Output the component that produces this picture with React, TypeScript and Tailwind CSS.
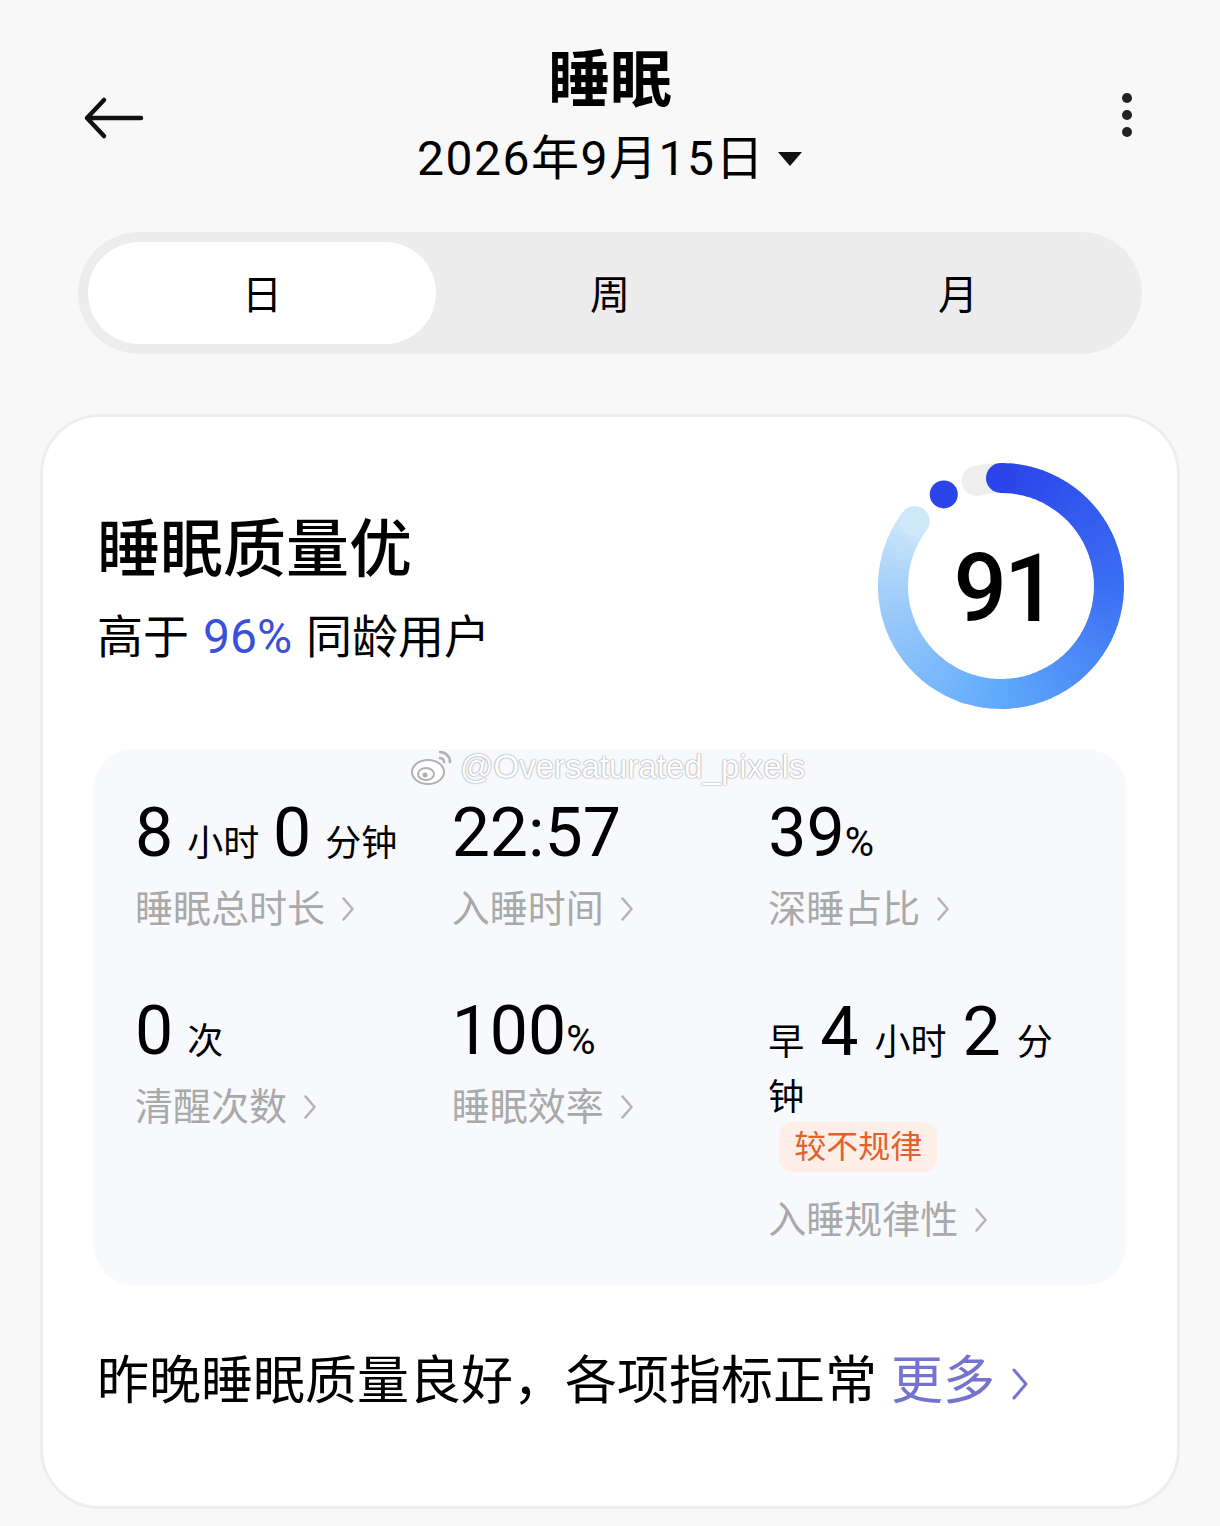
import React from 'react';

type RGB = [number, number, number];

const ringStops: [number, RGB][] = [
  [0, [42, 68, 233]],
  [90, [59, 110, 243]],
  [180, [94, 169, 251]],
  [270, [165, 208, 249]],
  [307, [207, 233, 251]],
];

function colorAt(deg: number) {
  for (let i = 0; i < ringStops.length - 1; i++) {
    const [a, ca] = ringStops[i];
    const [b, cb] = ringStops[i + 1];
    if (deg >= a && deg <= b) {
      const t = (deg - a) / (b - a);
      const c = ca.map((v, k) => Math.round(v + (cb[k] - v) * t));
      return `rgb(${c[0]},${c[1]},${c[2]})`;
    }
  }
  const last = ringStops[ringStops.length - 1][1];
  return `rgb(${last[0]},${last[1]},${last[2]})`;
}

const CX = 125;
const CY = 125;
const R = 108;

function pt(deg: number) {
  const rad = (deg * Math.PI) / 180;
  return [CX + R * Math.sin(rad), CY - R * Math.cos(rad)];
}

function arc(a: number, b: number) {
  const [x1, y1] = pt(a);
  const [x2, y2] = pt(b);
  const large = b - a > 180 ? 1 : 0;
  return `M ${x1} ${y1} A ${R} ${R} 0 ${large} 1 ${x2} ${y2}`;
}

function ScoreRing({ score }: { score: number }) {
  const end = 307;
  const step = 4;
  const segs: number[] = [];
  for (let d = 0; d < end; d += step) segs.push(d);
  const [sx, sy] = pt(0);
  const [ex, ey] = pt(end);
  const [dx, dy] = pt(-32);

  return (
    <div className="relative h-[250px] w-[250px]">
      <svg width="250" height="250" viewBox="0 0 250 250">
        <path d={arc(-13, 0)} stroke="#eeeeee" strokeWidth="30" strokeLinecap="round" fill="none" />
        {segs.map((d) => (
          <path
            key={d}
            d={arc(d, Math.min(d + step + 0.6, end))}
            stroke={colorAt(d + step / 2)}
            strokeWidth="30"
            fill="none"
          />
        ))}
        <circle cx={sx} cy={sy} r="15" fill={colorAt(0)} />
        <circle cx={ex} cy={ey} r="15" fill={colorAt(end)} />
        <circle cx={dx} cy={dy} r="14" fill="#2b45ea" />
      </svg>
      <div className="absolute inset-0 flex items-center justify-center pl-[6px] pt-[6px] text-[94px] font-medium leading-none tracking-[-3px] text-black">
        {score}
      </div>
    </div>
  );
}

function Chevron({ className = 'text-[#b4b4b4]', w = 14, h = 26, sw = 2.4 }: { className?: string; w?: number; h?: number; sw?: number }) {
  return (
    <svg width={w} height={h} viewBox={`0 0 ${w} ${h}`} className={className}>
      <path
        d={`M ${sw} ${sw} L ${w - sw} ${h / 2} L ${sw} ${h - sw}`}
        stroke="currentColor"
        strokeWidth={sw}
        fill="none"
        strokeLinecap="round"
        strokeLinejoin="round"
      />
    </svg>
  );
}

function StatLabel({ children }: { children: React.ReactNode }) {
  return (
    <div className="mt-[9px] flex items-center gap-[16px] text-[38px] leading-[46px] text-[#a9a9a9]">
      <span>{children}</span>
      <Chevron />
    </div>
  );
}

function Big({ children }: { children: React.ReactNode }) {
  return <span className="text-[68px]">{children}</span>;
}

function Pct() {
  return <span className="text-[40px]">%</span>;
}

export default function App() {
  return (
    <div className="min-h-[1526px] bg-[#f8f8f8] font-['Roboto','Noto_Sans_CJK_SC',sans-serif] text-black">
      {/* header */}
      <div className="grid grid-cols-[1fr_auto_1fr] items-center pt-[45px]">
        <div className="pl-[83px] pt-[2px]">
          <svg width="62" height="44" viewBox="0 0 62 44">
            <path d="M 4 22 L 58 22 M 21 4 L 4 22 L 21 40" stroke="#111" strokeWidth="4.5" fill="none" strokeLinecap="round" strokeLinejoin="round" />
          </svg>
        </div>
        <div className="flex flex-col items-center">
          <div className="text-[62px] font-bold leading-[72px]">睡眠</div>
          <div className="mt-[12px] flex items-center gap-[12px] text-[48px] leading-[60px] tracking-[1.5px]">
            <span>2026年9月15日</span>
            <svg width="26" height="16" viewBox="0 0 26 16">
              <path d="M 1 1 L 25 1 L 13 15 Z" fill="#111" strokeLinejoin="round" />
            </svg>
          </div>
        </div>
        <div className="flex justify-end pr-[88px]">
          <div className="flex flex-col gap-[7px] pb-[4px]">
            <span className="h-[10px] w-[10px] rounded-full bg-[#222]" />
            <span className="h-[10px] w-[10px] rounded-full bg-[#222]" />
            <span className="h-[10px] w-[10px] rounded-full bg-[#222]" />
          </div>
        </div>
      </div>

      {/* tabs */}
      <div className="mx-[78px] mt-[43px] grid h-[122px] grid-cols-3 rounded-full bg-[#ececec] p-[10px] text-[40px]">
        <div className="flex items-center justify-center rounded-full bg-white pt-[6px]">日</div>
        <div className="flex items-center justify-center pt-[6px]">周</div>
        <div className="flex items-center justify-center pt-[6px]">月</div>
      </div>

      {/* card */}
      <div className="mx-[40px] mt-[60px] rounded-[60px] border-[3px] border-[#ededed] bg-white px-[51px] pb-[94px] pt-[44px]">
        <div className="flex items-center justify-between">
          <div className="pl-[3px] pt-[6px]">
            <div className="text-[63px] font-medium leading-[74px]">睡眠质量优</div>
            <div className="mt-[22px] text-[46px] leading-[56px]">
              高于<span className="mx-[14px] text-[48px] text-[#3b50d8]">96%</span>同龄用户
            </div>
          </div>
          <ScoreRing score={91} />
        </div>

        {/* stats panel */}
        <div className="relative mt-[38px] rounded-[40px] bg-[#f8f9fd] px-[41px] pb-[42px] pt-[51px]">
          <div className="pointer-events-none absolute left-[316px] top-[-7px] flex items-center gap-[6px] font-['Liberation_Sans',sans-serif] text-[33px] text-white [text-shadow:0_0_2px_#9a9a9a,0_0_1px_#9a9a9a]">
            <svg width="44" height="38" viewBox="0 0 44 38">
              <ellipse cx="18" cy="24" rx="16" ry="12" fill="#fff" stroke="#b0b0b0" strokeWidth="2" />
              <ellipse cx="16" cy="26" rx="8" ry="6" fill="#fff" stroke="#b0b0b0" strokeWidth="2" />
              <circle cx="15" cy="27" r="2.5" fill="#b0b0b0" />
              <path d="M 30 4 A 10 10 0 0 1 40 14 M 30 10 A 4 4 0 0 1 34 14" stroke="#b0b0b0" strokeWidth="2.5" fill="none" strokeLinecap="round" />
            </svg>
            <span>@Oversaturated_pixels</span>
          </div>

          <div className="grid grid-cols-3 gap-y-[66px]">
            <div>
              <div className="text-[36px] leading-[66px] [word-spacing:5px]">
                <Big>8</Big> 小时 <Big>0</Big> 分钟
              </div>
              <StatLabel>睡眠总时长</StatLabel>
            </div>
            <div>
              <div className="text-[36px] leading-[66px]">
                <Big>22:57</Big>
              </div>
              <StatLabel>入睡时间</StatLabel>
            </div>
            <div>
              <div className="text-[36px] leading-[66px]">
                <Big>39</Big>
                <Pct />
              </div>
              <StatLabel>深睡占比</StatLabel>
            </div>

            <div>
              <div className="text-[36px] leading-[66px] [word-spacing:5px]">
                <Big>0</Big> 次
              </div>
              <StatLabel>清醒次数</StatLabel>
            </div>
            <div>
              <div className="text-[36px] leading-[66px]">
                <Big>100</Big>
                <Pct />
              </div>
              <StatLabel>睡眠效率</StatLabel>
            </div>
            <div>
              <div className="flex w-[292px] flex-wrap items-baseline gap-x-[16px] gap-y-[14px] text-[36px] leading-none">
                <span>早</span>
                <span className="text-[68px]">4</span>
                <span>小时</span>
                <span className="text-[68px]">2</span>
                <span>分</span>
                <span>钟</span>
              </div>
              <div className="ml-[11px] mt-[6px] inline-flex h-[50px] items-center rounded-[14px] bg-[#fdeee8] px-[15px] text-[32px] text-[#e2622e]">
                较不规律
              </div>
              <div className="mt-[25px]">
                <StatLabel>入睡规律性</StatLabel>
              </div>
            </div>
          </div>
        </div>

        {/* summary */}
        <div className="mt-[67px] flex items-center pl-[3px] text-[52px] leading-[60px]">
          <span>昨晚睡眠质量良好，各项指标正常</span>
          <span className="ml-[14px] text-[#7474d0]">更多</span>
          <span className="ml-[16px] pt-[4px]">
            <Chevron className="text-[#7474d0]" w={18} h={34} sw={3} />
          </span>
        </div>
      </div>
    </div>
  );
}
